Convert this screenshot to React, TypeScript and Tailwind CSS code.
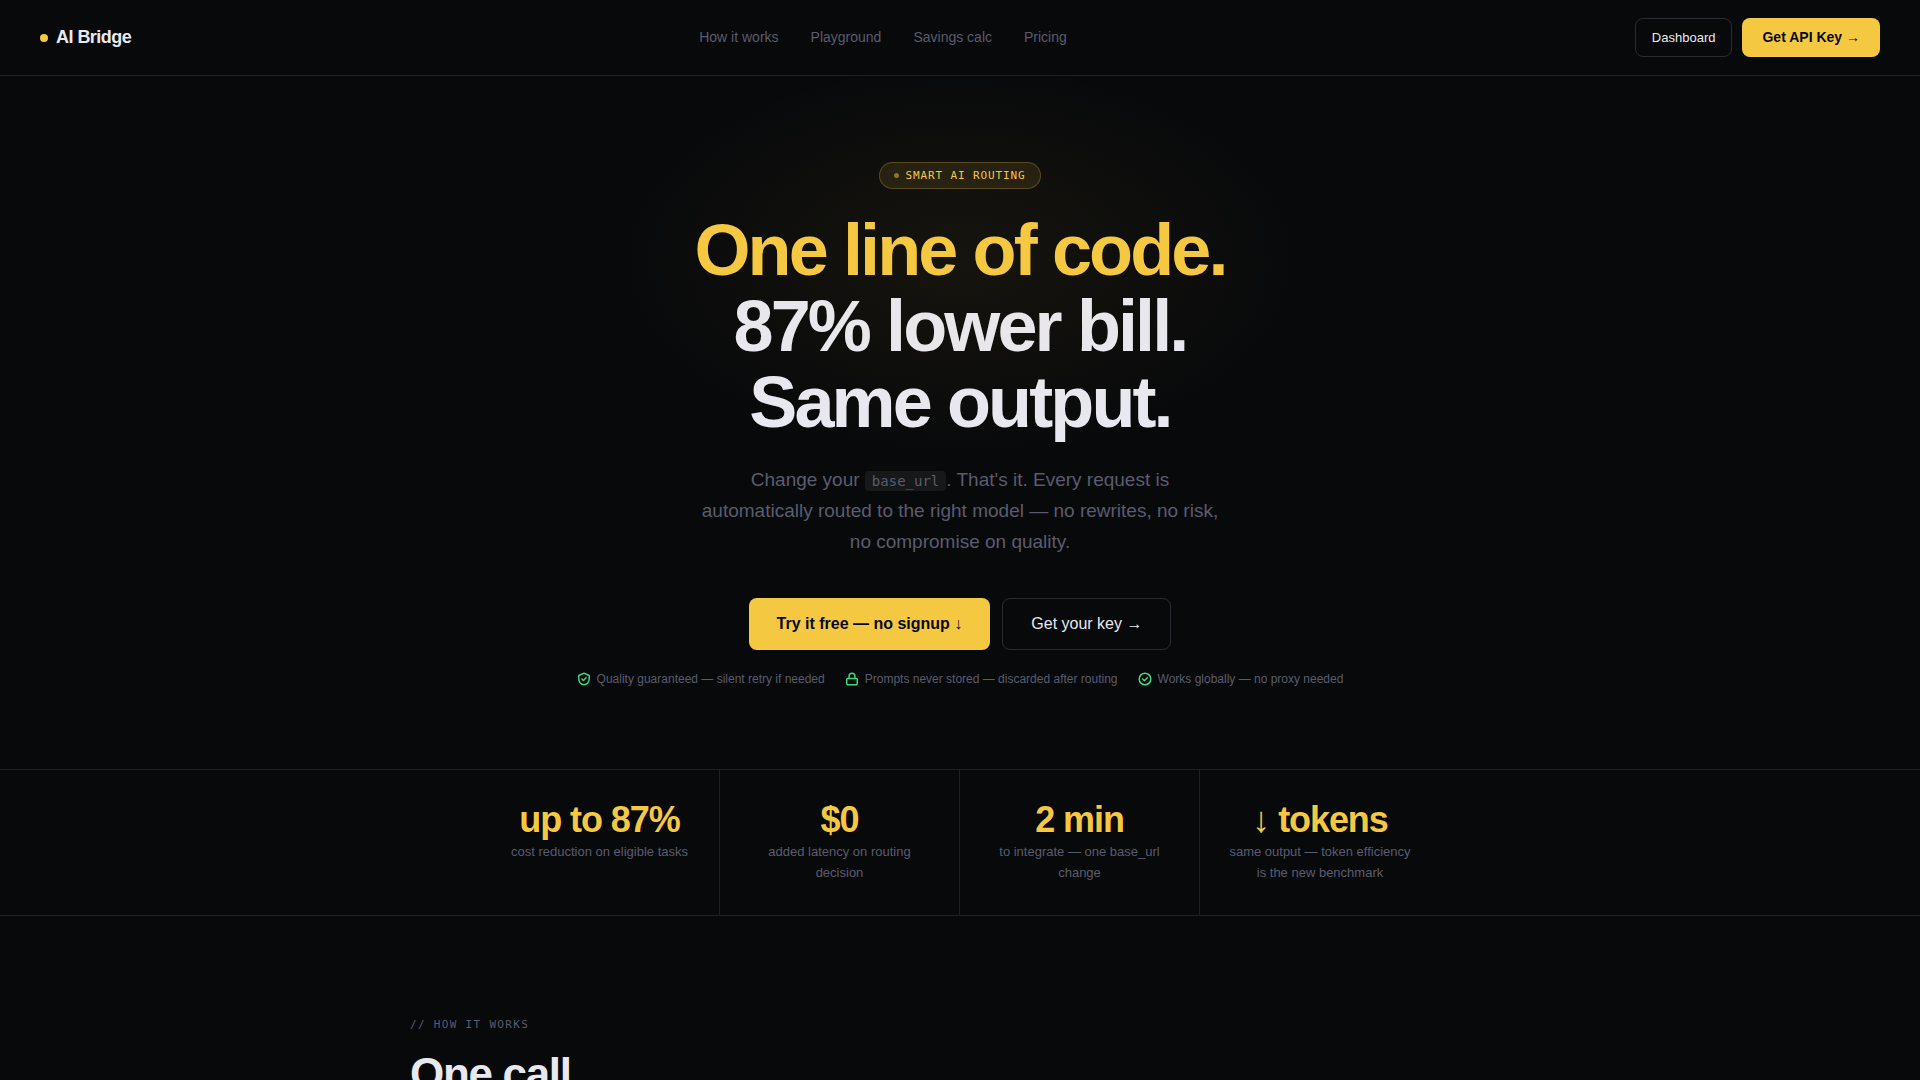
import type { ReactNode } from 'react'

const NAV_LINKS = [
  { label: 'How it works', href: '#how' },
  { label: 'Playground', href: '#playground' },
  { label: 'Savings calc', href: '#savings' },
  { label: 'Pricing', href: '#pricing' },
]

const STATS = [
  { value: 'up to 87%', label: 'cost reduction on eligible tasks' },
  { value: '$0', label: 'added latency on routing decision' },
  { value: '2 min', label: 'to integrate — one base_url change' },
  { value: '↓ tokens', label: 'same output — token efficiency is the new benchmark' },
]

function TrustIcon({ children }: { children: ReactNode }) {
  return (
    <svg
      className="size-3.5 shrink-0 text-[#3ddc84]"
      viewBox="0 0 24 24"
      fill="none"
      stroke="currentColor"
      strokeWidth="2.5"
      strokeLinecap="round"
      strokeLinejoin="round"
      aria-hidden="true"
    >
      {children}
    </svg>
  )
}

const TRUST_ITEMS = [
  {
    label: 'Quality guaranteed — silent retry if needed',
    icon: (
      <>
        <path d="M12 2 3 6v6c0 5 4 9 9 10 5-1 9-5 9-10V6z" />
        <path d="m8.5 12 2.5 2.5 4.5-4.5" />
      </>
    ),
  },
  {
    label: 'Prompts never stored — discarded after routing',
    icon: (
      <>
        <rect x="3" y="11" width="18" height="11" rx="2" />
        <path d="M7 11V7a5 5 0 0 1 10 0v4" />
      </>
    ),
  },
  {
    label: 'Works globally — no proxy needed',
    icon: (
      <>
        <circle cx="12" cy="12" r="10" />
        <path d="m8 12 3 3 5-5" />
      </>
    ),
  },
]

function Nav() {
  return (
    <nav className="flex items-center justify-between px-10 py-[18px] border-b border-[#1e2023]">
      <a href="#top" className="flex items-center gap-2 text-lg leading-[29px] font-bold tracking-[-0.03em]">
        <span className="size-2 rounded-full bg-[#f5c842]" />
        AI Bridge
      </a>
      <div className="flex gap-8 text-sm leading-[23px] text-[#5a5c6e]">
        {NAV_LINKS.map((link) => (
          <a key={link.href} href={link.href}>
            {link.label}
          </a>
        ))}
      </div>
      <div className="flex gap-2.5">
        <button className="px-4 py-2 rounded-lg border border-[#2a2c33] text-[13px] leading-[21px]">Dashboard</button>
        <button className="px-5 py-2 rounded-lg bg-[#f5c842] text-sm leading-[23px] font-bold text-[#08090b]">
          Get API Key →
        </button>
      </div>
    </nav>
  )
}

function Hero() {
  return (
    <header className="relative flex flex-col items-center px-10 pt-[86px] pb-[81px] text-center overflow-hidden">
      <div className="flex items-center gap-1.5 px-3.5 py-1 rounded-full border border-[#f5c842]/25 bg-[#f5c842]/10 font-['DejaVu_Sans_Mono',monospace] text-[11px] leading-[17px] tracking-[0.08em] text-[#f5c842]">
        <span className="size-[5px] rounded-full bg-[#f5c842]/50" />
        SMART AI ROUTING
      </div>

      <h1 className="mt-[23px] text-[72px] leading-[76px] font-bold tracking-[-0.04em]">
        <span className="text-[#f5c842]">One line of code.</span>
        <br />
        87% lower bill.
        <br />
        Same output.
      </h1>

      <p className="mt-6 max-w-[520px] text-[19px] leading-[31px] text-[#5a5c6e]">
        Change your{' '}
        <code className="px-[7px] py-0.5 rounded-sm bg-[#17181a] font-['DejaVu_Sans_Mono',monospace] text-sm">
          base_url
        </code>
        . That's it. Every request is automatically routed to the right model — no rewrites, no risk, no compromise on
        quality.
      </p>

      <div className="flex gap-3 mt-[41px]">
        <button className="px-7 py-[13px] rounded-lg bg-[#f5c842] text-base leading-[26px] font-bold text-[#08090b]">
          Try it free — no signup ↓
        </button>
        <button className="px-7 rounded-lg border border-[#2a2c33] text-base">Get your key →</button>
      </div>

      <ul className="flex flex-wrap justify-center gap-5 mt-5 text-xs leading-[18px] text-[#5a5c6e]">
        {TRUST_ITEMS.map((item) => (
          <li key={item.label} className="flex items-center gap-1.5">
            <TrustIcon>{item.icon}</TrustIcon>
            {item.label}
          </li>
        ))}
      </ul>

      {/* Soft glow over the headline */}
      <div className="absolute -top-4 left-1/2 w-[700px] h-[400px] -translate-x-1/2 bg-[radial-gradient(ellipse,rgba(245,200,66,0.06)_0%,transparent_70%)] pointer-events-none" />
    </header>
  )
}

function Stats() {
  return (
    <section className="border-y border-[#1e2023]">
      <div className="grid grid-cols-4 max-w-[960px] mx-auto text-center divide-x divide-[#1e2023]">
        {STATS.map((stat) => (
          <div key={stat.value} className="px-6 py-8">
            <div className="text-4xl leading-9 font-bold tracking-[-0.03em] text-[#f5c842]">{stat.value}</div>
            <div className="mt-[3px] text-[13px] leading-[21px] text-[#5a5c6e]">{stat.label}</div>
          </div>
        ))}
      </div>
    </section>
  )
}

function HowItWorks() {
  return (
    <section id="how" className="w-full max-w-[1100px] mx-auto pt-[100px]">
      <div className="font-['DejaVu_Sans_Mono',monospace] text-[11px] leading-[18px] tracking-[0.12em] text-[#5a5c6e]">
        // HOW IT WORKS
      </div>
      <h2 className="mt-4 text-[44px] leading-[48px] font-bold tracking-[-0.03em]">One call</h2>
    </section>
  )
}

export default function App() {
  return (
    <div
      id="top"
      className="min-h-screen bg-[#08090b] font-['Liberation_Sans',sans-serif] text-[#e8e8f0]"
    >
      <Nav />
      <Hero />
      <Stats />
      <HowItWorks />
    </div>
  )
}
